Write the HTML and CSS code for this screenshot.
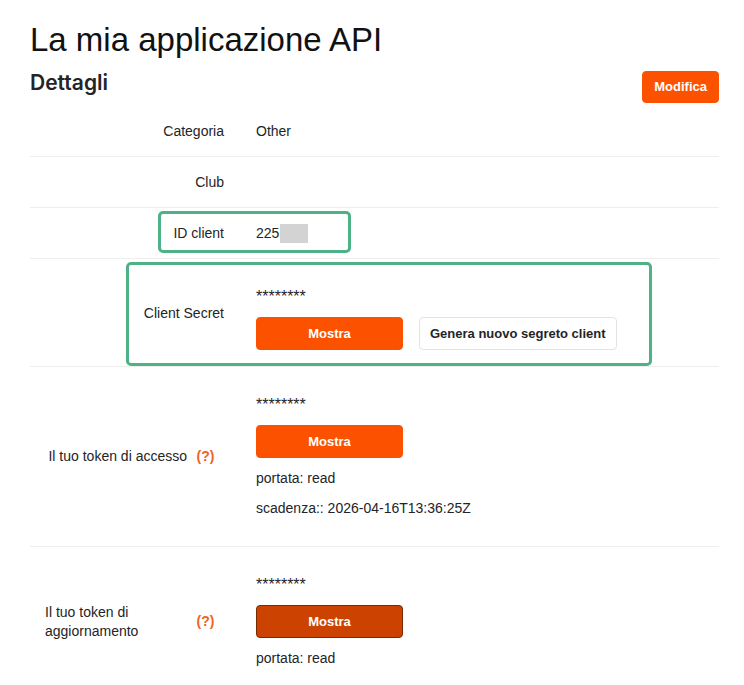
FILE: index.html
```html
<!DOCTYPE html>
<html lang="it">

<head>
    <meta charset="UTF-8">
    <meta name="viewport" content="width=device-width, initial-scale=1.0">
    <title>La mia applicazione API</title>
    <link rel="stylesheet" href="styles.css">
</head>

<body>
    <div class="page">
        <h1>La mia applicazione API</h1>

        <div class="section-head">
            <h2>Dettagli</h2>
            <button class="btn btn-primary btn-edit">Modifica</button>
        </div>

        <table class="details">
            <tr>
                <th>Categoria</th>
                <td>Other</td>
            </tr>
            <tr>
                <th>Club</th>
                <td></td>
            </tr>
            <tr>
                <th>ID client</th>
                <td>225<span class="redacted"></span></td>
            </tr>
            <tr>
                <th>Client Secret</th>
                <td>
                    <div class="secret">********</div>
                    <div class="actions">
                        <button class="btn btn-primary btn-show">Mostra</button>
                        <button class="btn btn-default">Genera nuovo segreto client</button>
                    </div>
                </td>
            </tr>
            <tr>
                <th>
                    <div class="label-help">
                        <span class="label-text">Il tuo token di accesso</span>
                        <span class="help">(?)</span>
                    </div>
                </th>
                <td>
                    <div class="secret">********</div>
                    <button class="btn btn-primary btn-show">Mostra</button>
                    <div class="meta">
                        <p>portata: read</p>
                        <p>scadenza:: 2026-04-16T13:36:25Z</p>
                    </div>
                </td>
            </tr>
            <tr>
                <th>
                    <div class="label-help">
                        <span class="label-text">Il tuo token di aggiornamento</span>
                        <span class="help">(?)</span>
                    </div>
                </th>
                <td>
                    <div class="secret">********</div>
                    <button class="btn btn-primary btn-show active">Mostra</button>
                    <div class="meta">
                        <p>portata: read</p>
                    </div>
                </td>
            </tr>
        </table>

        <!-- annotation frames drawn over the table -->
        <div class="highlight highlight-id"></div>
        <div class="highlight highlight-secret"></div>
    </div>
</body>

</html>
```

FILE: styles.css
```css
/* General Reset */
* {
    margin: 0;
    padding: 0;
    box-sizing: border-box;
}

body {
    font-family: "Liberation Sans", Arial, sans-serif;
    font-size: 14px;
    line-height: 20px;
    color: #242428;
    background: #fff;
}

.page {
    position: relative;
    width: 689px;
    margin-left: 30px;
    padding-top: 20px;
}

h1 {
    font-size: 33px;
    line-height: 40px;
    font-weight: normal;
    color: #111;
}

.section-head {
    display: flex;
    justify-content: space-between;
    align-items: flex-start;
    margin-top: 9px;
}

h2 {
    font-family: Inter, "Liberation Sans", sans-serif;
    font-size: 21px;
    line-height: 28px;
    font-weight: 600;
}

/* Buttons */
.btn {
    font-family: inherit;
    font-size: 13px;
    font-weight: bold;
    line-height: 20px;
    border-radius: 4px;
    cursor: pointer;
}

.btn-primary {
    background: #fc5200;
    border: 1px solid #fc5200;
    color: #fff;
}

.btn-primary.active {
    background: #cc4200;
    border-color: #7a2a00;
}

.btn-edit {
    height: 32px;
    padding: 0 11px;
    margin-top: 2px;
}

.btn-show {
    display: block;
    width: 147px;
    height: 33px;
}

.btn-default {
    height: 33px;
    padding: 0 10px;
    background: #fff;
    border: 1px solid #e3e3e3;
    color: #242428;
}

/* Details table */
.details {
    width: 100%;
    margin-top: 3px;
    border-collapse: collapse;
}

.details th,
.details td {
    padding: 15px 16px;
    border-bottom: 1px solid #eeeeee;
    vertical-align: middle;
    font-weight: normal;
}

.details th {
    width: 210px;
    padding-left: 15px;
    text-align: right;
}

.redacted {
    display: inline-block;
    width: 28px;
    height: 19px;
    margin-left: 1px;
    vertical-align: -5px;
    background: #d3d3d3;
}

.secret {
    font-size: 16px;
    margin: 13px 0 10px;
}

.actions {
    display: flex;
    gap: 16px;
    margin-bottom: 1px;
}

.meta p {
    margin-top: 10px;
}

.meta p:last-child {
    margin-bottom: 13px;
}

.label-help {
    display: flex;
    justify-content: flex-end;
    align-items: center;
    text-align: left;
    line-height: 19px;
}

.help {
    flex: 0 0 37px;
    text-align: center;
    color: #f0631e;
    font-weight: bold;
}

/* Annotation frames */
.highlight {
    position: absolute;
    border: 3px solid #4fb286;
    border-radius: 5px;
}

.highlight-id {
    left: 128px;
    top: 211px;
    width: 193px;
    height: 42px;
}

.highlight-secret {
    left: 96px;
    top: 262px;
    width: 526px;
    height: 104px;
}
```
